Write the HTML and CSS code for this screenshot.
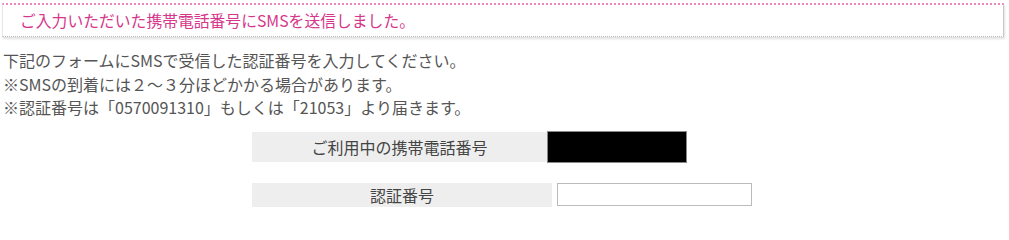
FILE: index.html
```html
<!DOCTYPE html>
<html lang="ja">
<head>
<meta charset="utf-8">
<link rel="stylesheet" href="styles.css">
</head>
<body>
<div class="notice">ご入力いただいた携帯電話番号にSMSを送信しました。</div>
<p class="desc">下記のフォームにSMSで受信した認証番号を入力してください。<br>※SMSの到着には２～３分ほどかかる場合があります。<br>※認証番号は「0570091310」もしくは「21053」より届きます。</p>
<div class="form">
  <div class="row row-phone">
    <div class="label label-phone">ご利用中の携帯電話番号</div>
    <div class="masked"></div>
  </div>
  <div class="row row-code">
    <div class="label label-code">認証番号</div>
    <input class="code-input" type="text">
  </div>
</div>
</body>
</html>
```
FILE: styles.css
```css
html, body {
  margin: 0;
  padding: 0;
  background: #fff;
  overflow: hidden;
}
body {
  font-family: "Noto Sans CJK JP", "Noto Sans", sans-serif;
  color: #555;
}
.notice {
  margin: 3px 5px 0 2px;
  height: 34px;
  box-sizing: border-box;
  border-top: 2px dotted #ef85bd;
  border-left: 1px solid #e6e6e6;
  border-right: 1px solid #c8c8c8;
  border-bottom: 1px dotted #b8b8b8;
  box-shadow: 1px 2px 2px rgba(0,0,0,0.12);
  padding: 1px 0 0 17px;
  font-size: 15.8px;
  line-height: 29px;
  color: #d6368b;
}
.desc {
  margin: 12px 0 0 3px;
  font-size: 16px;
  line-height: 23.5px;
  color: #555;
}
.form {
  margin: 11px 0 0 252px;
}
.row {
  display: flex;
  align-items: center;
}
.label {
  background: #eeeeee;
  text-align: center;
  font-size: 16px;
  color: #444;
}
.label-phone {
  width: 295px;
  height: 30px;
  line-height: 30px;
}
.masked {
  width: 140px;
  height: 32px;
  box-sizing: border-box;
  background: #000;
  border: 1px solid #888;
}
.row-code {
  margin-top: 20px;
}
.label-code {
  width: 300px;
  height: 24px;
  line-height: 24px;
}
.code-input {
  margin: 0 0 0 5px;
  width: 195px;
  height: 23px;
  box-sizing: border-box;
  border: 1px solid #bbb;
  padding: 0 4px;
  font-size: 14px;
  background: #fff;
}
```
